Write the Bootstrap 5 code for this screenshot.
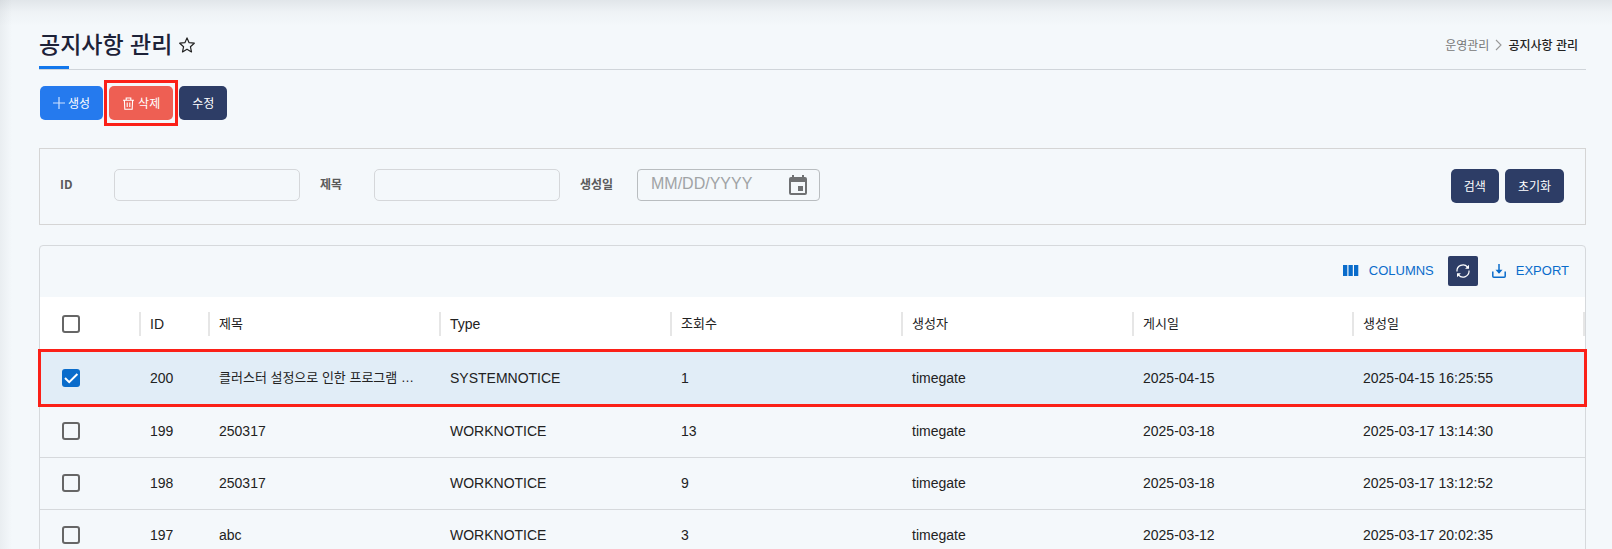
<!DOCTYPE html>
<html lang="ko">
<head>
<meta charset="utf-8">
<meta name="viewport" content="width=device-width, initial-scale=1">
<title>공지사항 관리</title>
<link href="https://cdn.jsdelivr.net/npm/bootstrap@5.3.0/dist/css/bootstrap.min.css" rel="stylesheet">
<style>
  :root {
    --navy: #2d3d66;
    --line: #d6d9dc;
    --blue: #0a6ccb;
    --kr: "Noto Sans CJK KR", sans-serif;
    --grid: "Liberation Sans", "Noto Sans CJK KR", sans-serif;
  }
  body { background: #f4f8fb; font-family: var(--kr); font-size: 12px; color: #222; }
  .page {
    height: 100vh; overflow: hidden; padding: 0 26px 0 39px;
    background:
      linear-gradient(rgba(60, 70, 80, .1), rgba(60, 70, 80, .03) 12px, transparent 26px),
      linear-gradient(to right, rgba(60, 70, 80, .06), transparent 12px);
  }
  .page-head { padding-top: 20px; height: 70px; border-bottom: 1px solid #d0d5da; position: relative; }
  .page-head::after { content: ""; position: absolute; left: 0; bottom: 0; width: 30px; height: 3px; background: #1277ec; }
  .page-title { font-size: 23px; font-weight: 500; line-height: 32px; padding-bottom: 4px; color: #1d2238; }
  .title-row { gap: 7px; }
  .star-btn { line-height: 0; }
  .crumbs { gap: 6px; }
  .crumbs a { color: #777; text-decoration: none; }
  .crumbs .here { color: #222; font-weight: 500; }

  .act-row { gap: 6px; padding: 16px 1px 28px; }
  .act { height: 34px; padding: 0 13px; border: 0; border-radius: 5px; font-size: 12px; line-height: 18px; color: #fff; position: relative; }
  .act:hover { color: #fff; }
  .act-icon { gap: 3px; }
  .act-blue, .act-blue:hover { background: #257aee; }
  .act-red, .act-red:hover { background: #ee5f53; }
  .act-red::after { content: ""; position: absolute; inset: -6px -5px; border: 3px solid #fb2018; }
  .act-navy, .act-navy:hover { background: var(--navy); }

  .search-box { padding: 20px 21px 21px 20px; border: 1px solid #d5d5d5; }
  .search-box label { width: 54px; font-weight: 700; line-height: 30px; color: #5a5a5a; }
  .search-box .form-control { width: 186px; height: 32px; border: 1px solid #d5d7da; border-radius: 5px; background: transparent; }
  .search-box .date-wrap { width: 183px; height: 32px; border: 1px solid #b9bdc0; border-radius: 4px; padding: 0 12px 0 13px; }
  .search-box .date-wrap .form-control { border: 0; padding: 0 0 3px; height: 28px; width: 110px; font: 16px "Liberation Sans", sans-serif; }
  .date-wrap .form-control::placeholder { color: #a0a3a5; opacity: 1; }
  .search-box .date-label { width: 57px; }

  .grid-box { margin-top: 20px; border: 1px solid var(--line); border-radius: 4px 4px 0 0; font-family: var(--grid); font-size: 14px; }
  .grid-tools { height: 51px; padding: 0 16px 2px; gap: 14px; }
  .tool { gap: 10px; border: 0; padding: 0; background: none; color: var(--blue); font-size: 13px; line-height: 20px; }
  .tool-refresh { width: 30px; height: 30px; padding: 0; border: 0; border-radius: 2px; background: var(--navy); }

  .notice-table { table-layout: fixed; width: 100%; color: #222; }
  .notice-table th, .notice-table td { padding: 0 9px; line-height: 20px; font-weight: 400; vertical-align: middle; }
  .notice-table th { height: 54px; background: #fff linear-gradient(#e6e6e6, #e6e6e6) no-repeat right center / 2px 24px; }
  .notice-table td { height: 52px; border-bottom: 1px solid var(--line); }
  .notice-table th:first-child, .notice-table td:first-child { padding-left: 22px; }
  .notice-table .picked { outline: 3px solid #fb2018; outline-offset: -1px; }
  .notice-table .picked td { height: 54px; border: 0; background: #e1edf7; }
  .notice-table .ko { font-size: 13px; }
  .w-check { width: 101px; }
  .w-id { width: 69px; }
  .w-date { width: 220px; }
  .notice-table .form-check-input {
    width: 18px; height: 18px; margin: 0; display: block;
    border: 2px solid #666; border-radius: 3px; background-color: transparent;
  }
  .notice-table .form-check-input:checked {
    border: 0; background-color: var(--blue); background-size: 100%;
    background-image: url("data:image/svg+xml,%3csvg xmlns='http://www.w3.org/2000/svg' viewBox='0 0 18 18'%3e%3cpath d='M3 9l4.2 4.2L15.4 5' fill='none' stroke='%23fff' stroke-width='2'/%3e%3c/svg%3e");
  }
</style>
</head>
<body>
<main class="page">
  <header class="page-head d-flex align-items-center justify-content-between">
    <div class="title-row d-flex align-items-center">
      <h1 class="page-title mb-0">공지사항 관리</h1>
      <button type="button" class="star-btn btn border-0 p-0" aria-label="즐겨찾기">
        <svg width="16" height="16" viewBox="0 0 16 16" fill="none" stroke="#222" stroke-width="1.2" stroke-linejoin="round"><path d="M8 .9l2.1 4.8 5.2.5-3.9 3.5 1.1 5.2L8 12.2l-4.5 2.7 1.1-5.2L.7 6.2l5.2-.5z"/></svg>
      </button>
    </div>
    <nav class="crumbs d-flex align-items-center pe-2" aria-label="breadcrumb">
      <a href="#">운영관리</a>
      <svg width="7" height="12" viewBox="0 0 7 12" fill="none" stroke="#999" stroke-width="1.1"><path d="M1 1l5 5-5 5"/></svg>
      <span class="here">공지사항 관리</span>
    </nav>
  </header>

  <div class="act-row d-flex">
    <button type="button" class="btn act act-icon act-blue d-flex align-items-center">
      <svg width="12" height="12" viewBox="0 0 12 12" stroke="#cfe2ff" stroke-width="1.2"><path d="M6 0v12M0 6h12"/></svg>생성
    </button>
    <button type="button" class="btn act act-icon act-red d-flex align-items-center">
      <svg width="13" height="13" viewBox="0 0 13 13" fill="none" stroke="#fff" stroke-width="1.1"><path d="M1 3.2h11M4.2 3V1h4.6v2M2.4 3.4l.4 8.8h7.4l.4-8.8M5.2 5.4v4.6M7.8 5.4v4.6"/></svg>삭제
    </button>
    <button type="button" class="btn act act-navy">수정</button>
  </div>

  <form class="search-box d-flex align-items-start justify-content-between">
    <div class="d-flex" style="gap:20px">
      <div class="d-flex"><label for="f-id">ID</label><input id="f-id" type="text" class="form-control"></div>
      <div class="d-flex"><label for="f-title">제목</label><input id="f-title" type="text" class="form-control"></div>
      <div class="d-flex"><label for="f-date" class="date-label">생성일</label>
        <div class="date-wrap d-flex align-items-center justify-content-between">
          <input id="f-date" type="text" class="form-control" placeholder="MM/DD/YYYY">
          <button type="button" class="btn border-0 p-0 d-flex" aria-label="날짜 선택">
            <svg width="18" height="20" viewBox="0 0 18 20"><path d="M3 0h2v3H3zM13 0h2v3h-2zM9 11h5v5H9z" fill="#6f7173"/><path fill="#6f7173" fill-rule="evenodd" d="M2 2h14a2 2 0 0 1 2 2v14a2 2 0 0 1-2 2H2a2 2 0 0 1-2-2V4a2 2 0 0 1 2-2zM2 7v11h14V7z"/></svg>
          </button>
        </div>
      </div>
    </div>
    <div class="d-flex" style="gap:6px">
      <button type="submit" class="btn act act-navy">검색</button>
      <button type="reset" class="btn act act-navy">초기화</button>
    </div>
  </form>

  <section class="grid-box">
    <div class="grid-tools d-flex align-items-center justify-content-end">
      <button type="button" class="tool d-flex align-items-center">
        <svg width="16" height="11" viewBox="0 0 16 11" fill="currentColor"><path d="M0 0h4.300v11H0zM5.500 0h4.300v11H5.500zM11 0h4.300v11H11z"/></svg>COLUMNS
      </button>
      <button type="button" class="tool-refresh d-flex align-items-center justify-content-center" aria-label="새로고침">
        <svg width="14" height="14" viewBox="0 0 14 14" fill="none" stroke="#fff" stroke-width="1.2"><path d="M1 7.500A6 6 0 0 1 11.500 3M13 6.500A6 6 0 0 1 2.500 11"/><path d="M13 .8v3.900H9.100zM1 13.200V9.300h3.900z" fill="#fff" stroke="none"/></svg>
      </button>
      <button type="button" class="tool d-flex align-items-center">
        <svg width="14" height="14" viewBox="0 0 14 14" fill="none" stroke="currentColor" stroke-width="1.5"><path d="M.8 7.500v4.700q0 1 1 1h10.400q1 0 1-1V7.500M7 0v9"/><path d="M3.500 5.800h7L7 9.800z" fill="currentColor" stroke="none"/></svg>EXPORT
      </button>
    </div>
    <table class="notice-table">
      <thead>
        <tr>
          <th class="w-check"><input class="form-check-input" type="checkbox" aria-label="전체 선택"></th>
          <th class="w-id">ID</th><th class="ko">제목</th><th>Type</th><th class="ko">조회수</th><th class="ko">생성자</th><th class="ko w-date">게시일</th><th class="ko">생성일</th>
        </tr>
      </thead>
      <tbody>
        <tr class="picked">
          <td><input class="form-check-input" type="checkbox" checked aria-label="200 선택"></td>
          <td>200</td><td class="ko text-nowrap">클러스터 설정으로 인한 프로그램 …</td><td>SYSTEMNOTICE</td><td>1</td><td>timegate</td><td>2025-04-15</td><td>2025-04-15 16:25:55</td>
        </tr>
        <tr>
          <td><input class="form-check-input" type="checkbox" aria-label="199 선택"></td>
          <td>199</td><td>250317</td><td>WORKNOTICE</td><td>13</td><td>timegate</td><td>2025-03-18</td><td>2025-03-17 13:14:30</td>
        </tr>
        <tr>
          <td><input class="form-check-input" type="checkbox" aria-label="198 선택"></td>
          <td>198</td><td>250317</td><td>WORKNOTICE</td><td>9</td><td>timegate</td><td>2025-03-18</td><td>2025-03-17 13:12:52</td>
        </tr>
        <tr>
          <td><input class="form-check-input" type="checkbox" aria-label="197 선택"></td>
          <td>197</td><td>abc</td><td>WORKNOTICE</td><td>3</td><td>timegate</td><td>2025-03-12</td><td>2025-03-17 20:02:35</td>
        </tr>
      </tbody>
    </table>
  </section>
</main>
<script src="https://cdn.jsdelivr.net/npm/bootstrap@5.3.0/dist/js/bootstrap.bundle.min.js"></script>
</body>
</html>
